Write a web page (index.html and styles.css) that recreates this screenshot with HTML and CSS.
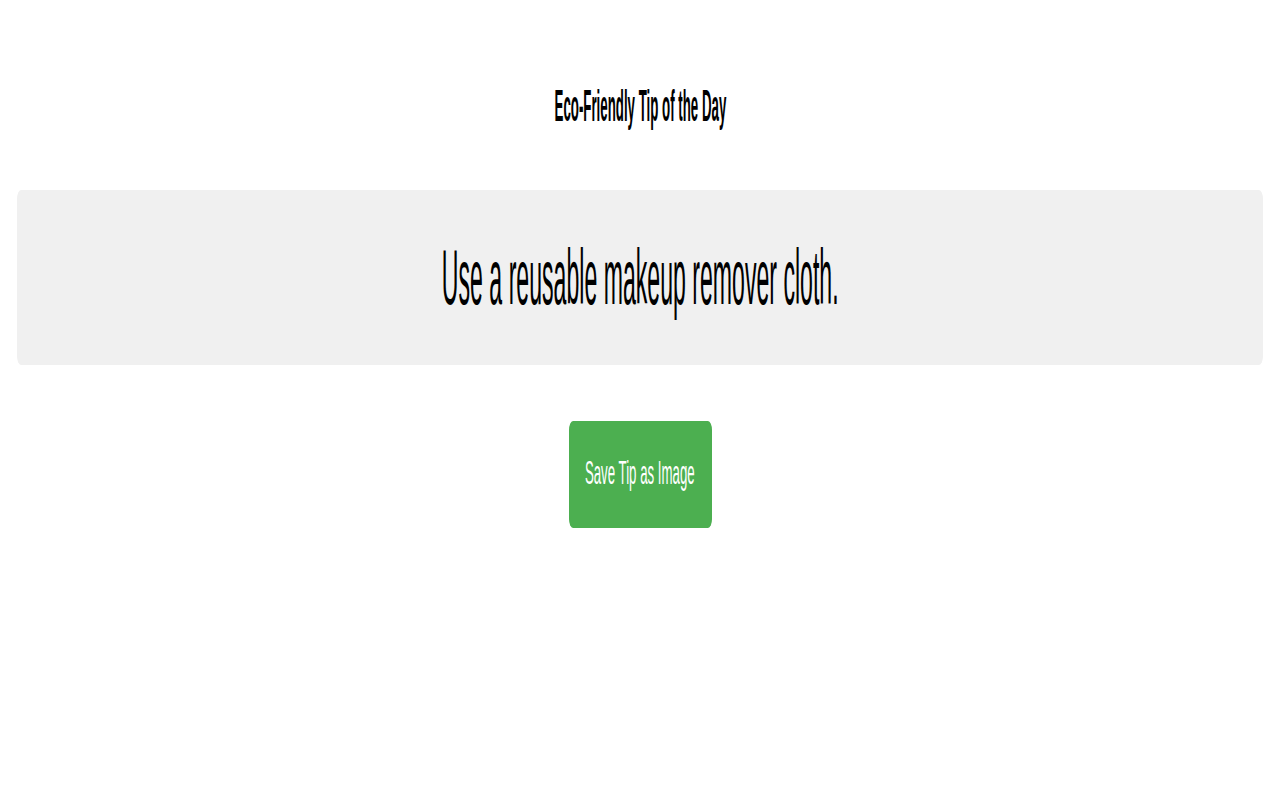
FILE: index.html
```html
<!DOCTYPE html>
<html lang="en">
<head>
<meta charset="utf-8">
<title>Eco-Friendly Tip of the Day</title>
<link rel="stylesheet" href="styles.css">
</head>
<body>
<div class="page">
  <h1 class="title"><span class="squeeze squeeze-title">Eco-Friendly Tip of the Day</span></h1>
  <div class="tip-box">
    <p class="tip"><span class="squeeze squeeze-tip">Use a reusable makeup remover cloth.</span></p>
  </div>
  <button class="save-btn" type="button"><span class="squeeze squeeze-btn">Save Tip as Image</span></button>
</div>
</body>
</html>
```

FILE: styles.css
```css
html, body {
  margin: 0;
  padding: 0;
  background: #ffffff;
}

body {
  font-family: "Liberation Sans", Arial, sans-serif;
  color: #000000;
}

.page {
  display: flex;
  flex-direction: column;
  align-items: center;
  padding-top: 84px;
}

.squeeze {
  display: inline-block;
  white-space: nowrap;
  transform-origin: center center;
}

.title {
  margin: 0;
  font-size: 44px;
  line-height: 44px;
  font-weight: bold;
  display: flex;
  justify-content: center;
  width: 100%;
}

.squeeze-title {
  transform: scaleX(0.302);
}

.tip-box {
  margin-top: 62px;
  align-self: stretch;
  margin-left: 17px;
  margin-right: 17px;
  background: #f0f0f0;
  border-radius: 4px / 9px;
  padding: 49px 0;
  display: flex;
  justify-content: center;
}

.tip {
  margin: 0;
  font-size: 77px;
  line-height: 77px;
  display: flex;
  justify-content: center;
  width: 100%;
}

.squeeze-tip {
  transform: scaleX(0.30);
}

.save-btn {
  margin-top: 56px;
  width: 143px;
  padding: 34px 0 39px;
  background: #4caf50;
  color: #ffffff;
  border: none;
  border-radius: 4px / 9px;
  font-family: "Liberation Sans", Arial, sans-serif;
  font-size: 34px;
  line-height: 34px;
  display: flex;
  justify-content: center;
  cursor: pointer;
}

.squeeze-btn {
  transform: scaleX(0.39);
}
```
